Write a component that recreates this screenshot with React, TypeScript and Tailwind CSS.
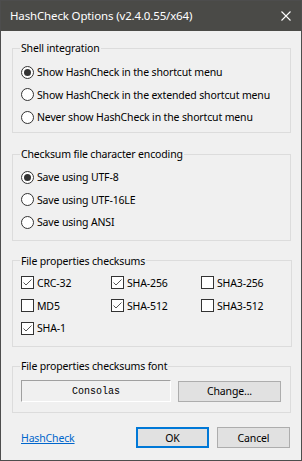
import React from 'react';

const font = { fontFamily: '"Noto Sans", "Liberation Sans", sans-serif' };

const Radio = ({ checked, label }: { checked?: boolean; label: string }) => (
    <div className="flex items-center h-[22.5px]">
        <div className="w-[13px] h-[13px] rounded-full border border-[#333333] bg-white flex items-center justify-center shrink-0">
            {checked && <div className="w-[7px] h-[7px] rounded-full bg-[#333333]" />}
        </div>
        <span className="ml-[3px] text-[10.5px] tracking-[-0.15px] leading-[16px] text-black whitespace-nowrap">{label}</span>
    </div>
);

const Check = ({ checked, label }: { checked?: boolean; label: string }) => (
    <div className="flex items-center h-[22.75px]">
        <div className="w-[13px] h-[13px] border border-[#333333] bg-white shrink-0 relative">
            {checked && (
                <svg width="11" height="11" viewBox="0 0 11 11" className="absolute left-0 top-0">
                    <path d="M1.5 5.5 L4 8 L9.5 2.5" fill="none" stroke="#555555" strokeWidth="1" />
                </svg>
            )}
        </div>
        <span className="ml-[3px] text-[10.5px] tracking-[-0.15px] leading-[16px] text-black whitespace-nowrap">{label}</span>
    </div>
);

const Group = ({ title, className, children }: { title: string; className: string; children: React.ReactNode }) => (
    <fieldset className={`w-[279px] ml-[11px] border border-[#dcdcdc] pl-[8px] ${className}`}>
        <legend className="-ml-[1px] px-[1px] text-[10.5px] tracking-[-0.15px] leading-[16px] text-black">{title}</legend>
        {children}
    </fieldset>
);

export default function App() {
    return (
        <div className="w-[302px] h-[461px] border border-[#4d4d4d] bg-[#f0f0f0] flex flex-col overflow-hidden" style={font}>
            {/* title bar */}
            <div className="h-[30px] bg-[#4a4a47] flex items-center justify-between shrink-0">
                <span className="ml-[9px] text-[11.5px] tracking-[-0.15px] text-white">HashCheck Options (v2.4.0.55/x64)</span>
                <svg width="10" height="10" viewBox="0 0 10 10" className="mr-[10px]">
                    <path d="M0.5 0.5 L9.5 9.5 M9.5 0.5 L0.5 9.5" stroke="#ffffff" strokeWidth="1.1" />
                </svg>
            </div>

            <Group title="Shell integration" className="mt-[9px] pt-[5px] pb-[3.5px]">
                <Radio checked label="Show HashCheck in the shortcut menu" />
                <Radio label="Show HashCheck in the extended shortcut menu" />
                <Radio label="Never show HashCheck in the shortcut menu" />
            </Group>

            <Group title="Checksum file character encoding" className="mt-[13px] pt-[4px] pb-[6px]">
                <Radio checked label="Save using UTF-8" />
                <Radio label="Save using UTF-16LE" />
                <Radio label="Save using ANSI" />
            </Group>

            <Group title="File properties checksums" className="mt-[12px] pt-[3px] pb-[6.5px]">
                <div className="grid grid-cols-[90px_90px_90px]">
                    <Check checked label="CRC-32" />
                    <Check checked label="SHA-256" />
                    <Check label="SHA3-256" />
                    <Check label="MD5" />
                    <Check checked label="SHA-512" />
                    <Check label="SHA3-512" />
                    <Check checked label="SHA-1" />
                </div>
            </Group>

            <Group title="File properties checksums font" className="mt-[11px] pt-[6px] pb-[10px]">
                <div className="flex items-center">
                    <div className="w-[150px] h-[22px] border border-t-[#a0a0a0] border-l-[#a0a0a0] border-r-white border-b-white flex items-center justify-center">
                        <span className="text-[10px] text-black" style={{ fontFamily: '"Liberation Mono", monospace' }}>Consolas</span>
                    </div>
                    <button className="ml-[7px] w-[103px] h-[21px] bg-[#e1e1e1] border border-[#adadad] text-[10.5px] tracking-[-0.15px] text-black leading-none">
                        Change...
                    </button>
                </div>
            </Group>

            <div className="mt-[14px] flex items-center ml-[20px]">
                <a href="#" className="w-[54px] text-[10.5px] tracking-[-0.15px] text-[#0066cc] underline leading-[16px]">HashCheck</a>
                <button className="ml-[61px] w-[73px] h-[21px] bg-[#e1e1e1] border-2 border-[#0078d7] text-[10.5px] tracking-[-0.15px] text-black leading-none">OK</button>
                <button className="ml-[8px] w-[73px] h-[21px] bg-[#e1e1e1] border border-[#adadad] text-[10.5px] tracking-[-0.15px] text-black leading-none">Cancel</button>
            </div>
        </div>
    );
}
